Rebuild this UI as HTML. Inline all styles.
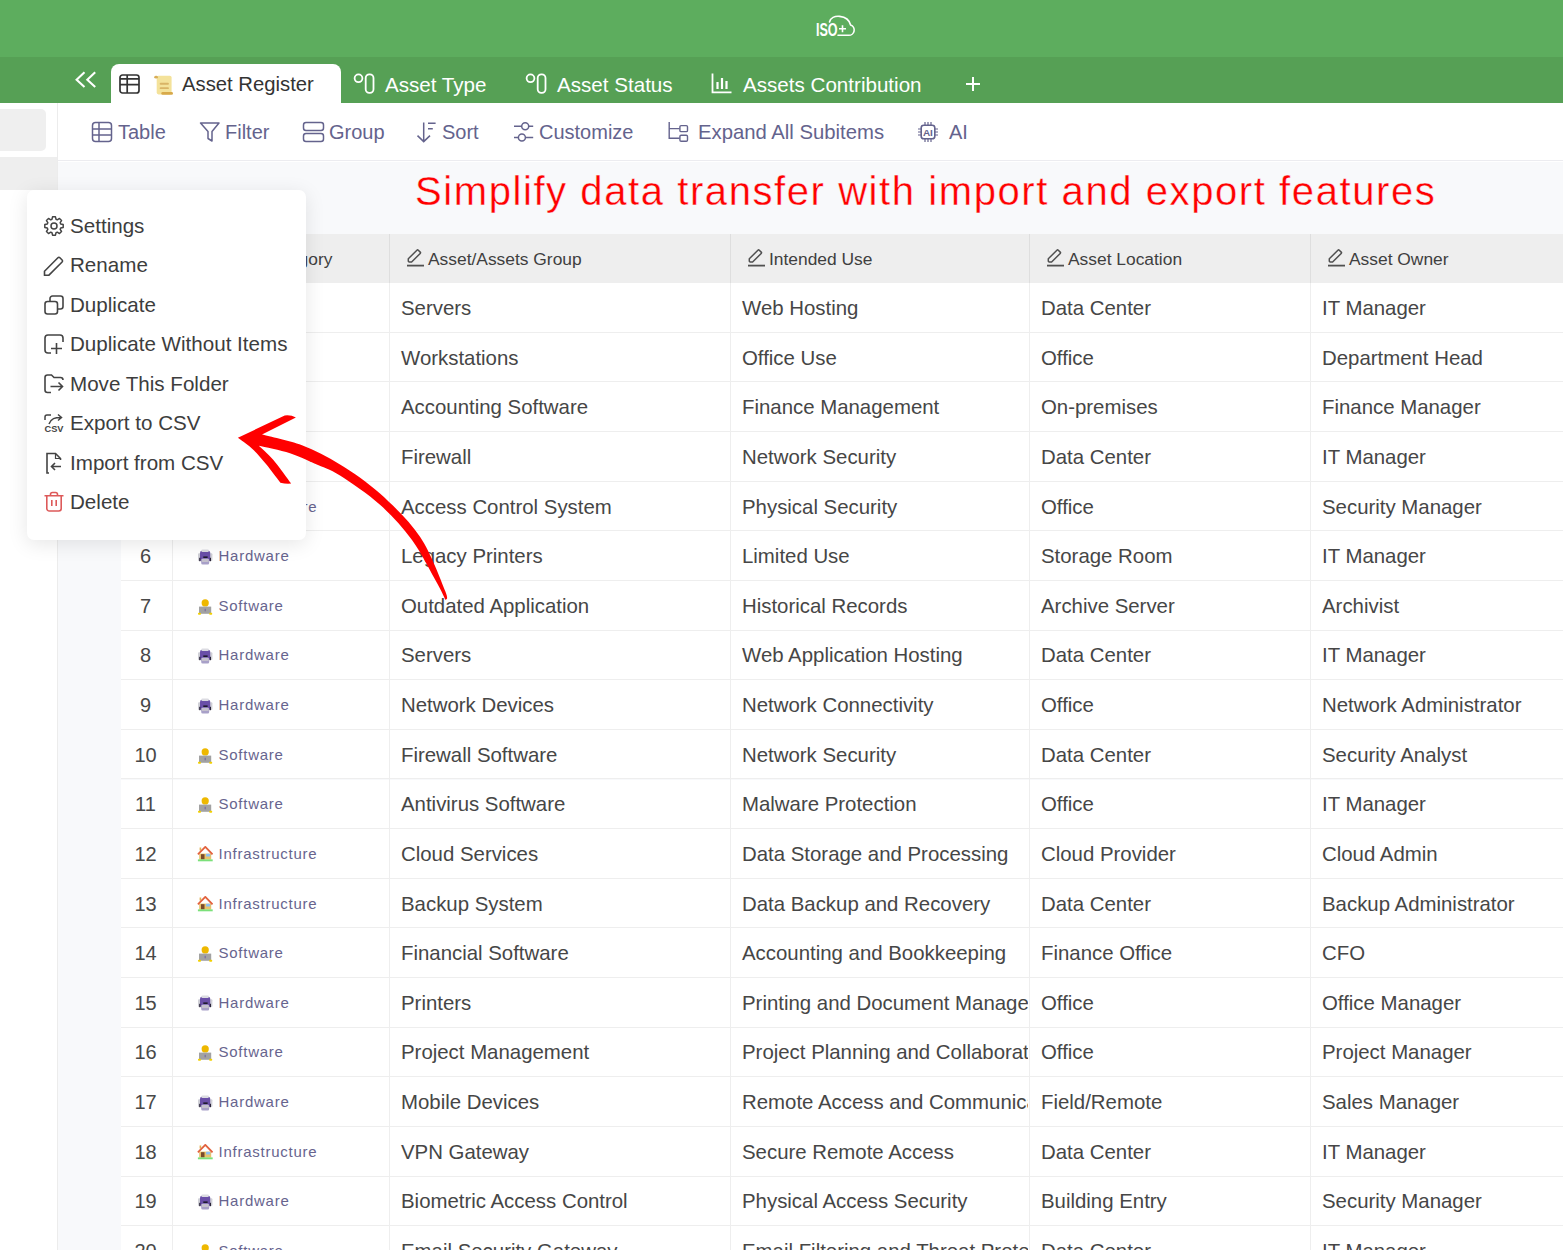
<!DOCTYPE html>
<html><head><meta charset="utf-8">
<style>
*{box-sizing:border-box;margin:0;padding:0}
html,body{width:1563px;height:1250px;overflow:hidden;background:#fff;font-family:"Liberation Sans",sans-serif}
.abs{position:absolute}
#top{position:absolute;left:0;top:0;width:1563px;height:56.5px;background:#5dad5e}
#tabs{position:absolute;left:0;top:56.5px;width:1563px;height:46.5px;background:#56a055}
.tab{position:absolute;top:0;height:47px;color:#fff;font-size:20.6px;line-height:47px;white-space:nowrap}
#atab{position:absolute;left:111px;top:64.3px;width:230px;height:39px;background:#fff;border-radius:8px 8px 0 0}
#toolbar{position:absolute;left:58px;top:103px;width:1505px;height:58px;background:#fff;border-bottom:1px solid #ececf0}
.tb{position:absolute;top:103px;height:58px;line-height:58px;font-size:20px;color:#64638d;white-space:nowrap}
.tb svg{position:absolute;top:19px}
#side{position:absolute;left:0;top:103px;width:58px;height:1147px;background:#fff;border-right:1px solid #ececec}
#sidebox{position:absolute;left:0;top:109px;width:46px;height:42px;background:#efefef;border-radius:0 5px 5px 0}
#sideband{position:absolute;left:0;top:157px;width:57px;height:33px;background:#eeeeee}
#light{position:absolute;left:58px;top:162px;width:1505px;height:1088px;background:#f8f9fb}
#title{position:absolute;left:415px;top:167px;font-size:40px;line-height:48px;color:#ff0000;letter-spacing:1.58px;white-space:nowrap;-webkit-text-stroke:0.35px #f8f9fb}
#tbl{position:absolute;left:0;top:0}
.hdr{position:absolute;background:#eeeeee}
.vline{position:absolute;width:1px;background:#eeeeee}
.htxt{position:absolute;height:50px;line-height:50px;font-size:17.4px;color:#3f3f3f;white-space:nowrap;padding-left:21px}
.htxt svg{top:15px !important}
.row{position:absolute;left:120.5px;width:1443px;background:#fff;border-bottom:1px solid #eeeeee}
.num{position:absolute;top:1px;height:100%;text-align:center;font-size:20px;color:#484848;display:flex;align-items:center;justify-content:center}
.cat{position:absolute;top:0;height:100%;display:flex;align-items:center;font-size:15px;letter-spacing:0.75px;color:#67648e;white-space:nowrap}
.cat svg{margin-right:6px;position:relative;top:0}
.cell{position:absolute;top:1px;height:100%;display:flex;align-items:center;padding-left:12px;font-size:20.4px;color:#464646;white-space:nowrap;overflow:hidden}
#menu{position:absolute;left:27px;top:190px;width:279px;height:350px;background:#fff;border-radius:7px;box-shadow:0 4px 20px rgba(0,0,0,0.10)}
.mi{position:absolute;left:16px;height:30px;line-height:30px;font-size:20.6px;color:#3d3d3d;white-space:nowrap;padding-left:27px}
.mi svg{position:absolute;left:0;top:4px}
</style></head><body>
<div id="top"></div>
<!-- ISO logo -->
<svg class="abs" style="left:812px;top:12px" width="46" height="28" viewBox="0 0 46 28">
  <text x="3.9" y="23.7" font-family="Liberation Sans" font-weight="bold" font-size="18" fill="#fff" textLength="21.7" lengthAdjust="spacingAndGlyphs">ISO</text>
  <path d="M26,23.3 H36.5 A5.3,5.3 0 0 0 38.6,13 C36,2.5 19,1.5 17.5,10" fill="none" stroke="#fff" stroke-width="1.6" stroke-linecap="round"/>
  <path d="M27 16.7 h7 M30.5 13.2 v7" stroke="#fff" stroke-width="1.6"/>
</svg>
<div id="tabs"></div>
<div id="atab"></div>
<!-- collapse chevrons -->
<svg class="abs" style="left:74px;top:70px" width="24" height="20" viewBox="0 0 24 20"><path d="M10.5 2.3 L2.6 9.7 L10.5 17.1 M21.2 2.3 L13.3 9.7 L21.2 17.1" fill="none" stroke="#fff" stroke-width="2.1"/></svg>
<!-- active tab content -->
<svg class="abs" style="left:119px;top:74px" width="21" height="20" viewBox="0 0 21 20"><rect x="1" y="1" width="19" height="18" rx="2.5" fill="none" stroke="#333" stroke-width="1.7"/><path d="M1 4.9 H20 M1 10.6 H20 M8.2 1 V19" stroke="#333" stroke-width="1.7"/></svg>
<svg class="abs" style="left:154px;top:75px" width="20" height="20" viewBox="0 0 20 20"><rect x="2.7" y="0.8" width="14.9" height="18.6" rx="1.8" fill="#f4e29a"/><ellipse cx="2.1" cy="2.2" rx="1.9" ry="1.4" fill="#d8ae58"/><rect x="7.3" y="17" width="11.7" height="2.8" rx="1.4" fill="#d8a94a"/><rect x="5.7" y="7.8" width="9.2" height="1.9" rx="0.9" fill="#d9b466"/><rect x="5.7" y="12.2" width="9.2" height="1.9" rx="0.9" fill="#d9b466"/></svg>
<div class="tab" style="left:182px;top:61px;color:#333;height:47px;font-size:20.3px">Asset Register</div>
<!-- other tabs -->
<svg class="abs" style="left:352px;top:72px" width="25" height="23" viewBox="0 0 25 23"><circle cx="6.5" cy="6.3" r="3.9" fill="none" stroke="#fff" stroke-width="1.8"/><rect x="13.7" y="2.4" width="7.8" height="18.4" rx="3.6" fill="none" stroke="#fff" stroke-width="1.8"/></svg>
<div class="tab" style="left:385px;top:61px">Asset Type</div>
<svg class="abs" style="left:524px;top:72px" width="25" height="23" viewBox="0 0 25 23"><circle cx="6.5" cy="6.3" r="3.9" fill="none" stroke="#fff" stroke-width="1.8"/><rect x="13.7" y="2.4" width="7.8" height="18.4" rx="3.6" fill="none" stroke="#fff" stroke-width="1.8"/></svg>
<div class="tab" style="left:557px;top:61px">Asset Status</div>
<svg class="abs" style="left:710px;top:72px" width="24" height="23" viewBox="0 0 24 23"><path d="M2.5 1.5 V20.3 H21.5" fill="none" stroke="#fff" stroke-width="1.8"/><path d="M7.5 10 V17 M12 6 V17 M16.5 9 V17" stroke="#fff" stroke-width="2.2"/></svg>
<div class="tab" style="left:743px;top:61px">Assets Contribution</div>
<svg class="abs" style="left:965px;top:76px" width="16" height="16" viewBox="0 0 16 16"><path d="M8 1 V15 M1 8 H15" stroke="#fff" stroke-width="2"/></svg>

<div id="side"></div>
<div id="sidebox"></div>
<div id="sideband"></div>
<div id="toolbar"></div>
<!-- toolbar items -->
<svg class="abs" style="left:91px;top:121px" width="22" height="22" viewBox="0 0 22 22"><rect x="1.5" y="1.5" width="19" height="19" rx="3" fill="none" stroke="#64638d" stroke-width="1.5"/><path d="M1.5 8 H20.5 M1.5 14 H20.5 M8 1.5 V20.5" stroke="#64638d" stroke-width="1.5"/></svg>
<div class="tb" style="left:118px">Table</div>
<svg class="abs" style="left:199px;top:121px" width="22" height="22" viewBox="0 0 22 22"><path d="M1.5 2 H20 L13 10.5 V20 L9 17.5 V10.5z" fill="none" stroke="#64638d" stroke-width="1.5" stroke-linejoin="round"/></svg>
<div class="tb" style="left:225px">Filter</div>
<svg class="abs" style="left:302px;top:121px" width="23" height="22" viewBox="0 0 23 22"><rect x="1.5" y="1.5" width="20" height="8" rx="2.5" fill="none" stroke="#64638d" stroke-width="1.5"/><rect x="1.5" y="12.5" width="20" height="8" rx="2.5" fill="none" stroke="#64638d" stroke-width="1.5"/></svg>
<div class="tb" style="left:329px">Group</div>
<svg class="abs" style="left:416px;top:121px" width="22" height="22" viewBox="0 0 22 22"><path d="M7.7 1.5 V20.3 M1.5 14.6 L7.7 20.6 L14 14.6 M12 2.3 H19.6 M12 7.7 H16.8" fill="none" stroke="#64638d" stroke-width="1.5"/></svg>
<div class="tb" style="left:442px">Sort</div>
<svg class="abs" style="left:513px;top:121px" width="22" height="22" viewBox="0 0 22 22"><path d="M1 5.2 H8.6 M15.8 5.2 H20.2 M1 16.5 H5.3 M12.5 16.5 H20.2" stroke="#64638d" stroke-width="1.5"/><circle cx="12.2" cy="5.2" r="3.5" fill="none" stroke="#64638d" stroke-width="1.5"/><circle cx="8.9" cy="16.5" r="3.5" fill="none" stroke="#64638d" stroke-width="1.5"/></svg>
<div class="tb" style="left:539px">Customize</div>
<svg class="abs" style="left:667px;top:121px" width="22" height="22" viewBox="0 0 22 22"><path d="M2.2 1 V17.3 H12.6 M2.2 7.6 H12.6" fill="none" stroke="#64638d" stroke-width="1.4"/><rect x="12.9" y="4.6" width="7.6" height="6" rx="1.2" fill="none" stroke="#64638d" stroke-width="1.4"/><rect x="12.9" y="14.3" width="7.6" height="6" rx="1.2" fill="none" stroke="#64638d" stroke-width="1.4"/></svg>
<div class="tb" style="left:698px;font-size:20.3px">Expand All Subitems</div>
<svg class="abs" style="left:917px;top:121px" width="22" height="22" viewBox="0 0 22 22"><rect x="4.2" y="4.2" width="13.6" height="13.6" rx="2.6" fill="none" stroke="#64638d" stroke-width="1.6"/><path d="M8 1 V4 M11 1 V4 M14 1 V4 M8 18 V21 M11 18 V21 M14 18 V21 M1 8 H4 M1 11 H4 M1 14 H4 M18 8 H21 M18 11 H21 M18 14 H21" stroke="#64638d" stroke-width="1.2"/><text x="5.9" y="14.6" font-family="Liberation Sans" font-weight="bold" font-size="9" fill="#64638d" textLength="10" lengthAdjust="spacingAndGlyphs">AI</text></svg>
<div class="tb" style="left:949px">AI</div>

<div id="light"></div>
<div id="title">Simplify data transfer with import and export features</div>

<div id="tbl">
<div class="hdr" style="left:120.5px;top:234px;width:1442.5px;height:49.2px"></div>
<div class="vline" style="left:172.0px;top:234px;height:49.2px;background:#dedede"></div>
<div class="htxt" style="left:192.5px;top:234px"><svg width="18" height="18" viewBox="0 0 18 18" style="position:absolute;left:0;top:0"><path d="M1.3 12.2 V9.8 L9.9 1.2 a1 1 0 0 1 1.4 0 L13.2 3.1 a1 1 0 0 1 0 1.4 L4.6 13 H2.1z" fill="none" stroke="#505050" stroke-width="1.5" stroke-linejoin="round"/><path d="M0 16.6 H17" stroke="#505050" stroke-width="1.8"/></svg><span>Asset Category</span></div>
<div class="vline" style="left:388.5px;top:234px;height:49.2px;background:#dedede"></div>
<div class="htxt" style="left:407px;top:234px"><svg width="18" height="18" viewBox="0 0 18 18" style="position:absolute;left:0;top:0"><path d="M1.3 12.2 V9.8 L9.9 1.2 a1 1 0 0 1 1.4 0 L13.2 3.1 a1 1 0 0 1 0 1.4 L4.6 13 H2.1z" fill="none" stroke="#505050" stroke-width="1.5" stroke-linejoin="round"/><path d="M0 16.6 H17" stroke="#505050" stroke-width="1.8"/></svg><span>Asset/Assets Group</span></div>
<div class="vline" style="left:729.5px;top:234px;height:49.2px;background:#dedede"></div>
<div class="htxt" style="left:748px;top:234px"><svg width="18" height="18" viewBox="0 0 18 18" style="position:absolute;left:0;top:0"><path d="M1.3 12.2 V9.8 L9.9 1.2 a1 1 0 0 1 1.4 0 L13.2 3.1 a1 1 0 0 1 0 1.4 L4.6 13 H2.1z" fill="none" stroke="#505050" stroke-width="1.5" stroke-linejoin="round"/><path d="M0 16.6 H17" stroke="#505050" stroke-width="1.8"/></svg><span>Intended Use</span></div>
<div class="vline" style="left:1028.5px;top:234px;height:49.2px;background:#dedede"></div>
<div class="htxt" style="left:1047px;top:234px"><svg width="18" height="18" viewBox="0 0 18 18" style="position:absolute;left:0;top:0"><path d="M1.3 12.2 V9.8 L9.9 1.2 a1 1 0 0 1 1.4 0 L13.2 3.1 a1 1 0 0 1 0 1.4 L4.6 13 H2.1z" fill="none" stroke="#505050" stroke-width="1.5" stroke-linejoin="round"/><path d="M0 16.6 H17" stroke="#505050" stroke-width="1.8"/></svg><span>Asset Location</span></div>
<div class="vline" style="left:1309.5px;top:234px;height:49.2px;background:#dedede"></div>
<div class="htxt" style="left:1328px;top:234px"><svg width="18" height="18" viewBox="0 0 18 18" style="position:absolute;left:0;top:0"><path d="M1.3 12.2 V9.8 L9.9 1.2 a1 1 0 0 1 1.4 0 L13.2 3.1 a1 1 0 0 1 0 1.4 L4.6 13 H2.1z" fill="none" stroke="#505050" stroke-width="1.5" stroke-linejoin="round"/><path d="M0 16.6 H17" stroke="#505050" stroke-width="1.8"/></svg><span>Asset Owner</span></div>
<div class="row" style="top:283.20px;height:49.63px">
<div class="num" style="left:-1px;width:52.0px">1</div>
<div class="cat" style="left:76.0px"><svg width="16" height="16" viewBox="0 0 16 16" style="top:1px"><rect x="1" y="4.2" width="14.4" height="7.8" rx="1" fill="#cfcfd6"/><rect x="3" y="1.8" width="10.2" height="10.8" rx="2" fill="#6a4fa8"/><rect x="4.4" y="0.4" width="7.4" height="2.6" rx="1" fill="#dcdce2"/><rect x="2.2" y="8.8" width="1.2" height="3.4" fill="#2a2438"/><rect x="12.8" y="8.8" width="1.2" height="3.4" fill="#2a2438"/><rect x="6.3" y="7.4" width="4.3" height="1.6" fill="#1e1a2e"/><rect x="4.2" y="9.6" width="8" height="5.8" rx="1.5" fill="#a8a0c8"/><rect x="4.8" y="10" width="6.8" height="3" fill="#c4c0cc"/></svg><span>Hardware</span></div>
<div class="cell" style="left:268.5px;width:340px">Servers</div>
<div class="cell" style="left:609.5px;width:298px">Web Hosting</div>
<div class="cell" style="left:908.5px;width:280px">Data Center</div>
<div class="cell" style="left:1189.5px;width:252px">IT Manager</div>
</div>
<div class="row" style="top:332.83px;height:49.63px">
<div class="num" style="left:-1px;width:52.0px">2</div>
<div class="cat" style="left:76.0px"><svg width="16" height="16" viewBox="0 0 16 16" style="top:1px"><rect x="1" y="4.2" width="14.4" height="7.8" rx="1" fill="#cfcfd6"/><rect x="3" y="1.8" width="10.2" height="10.8" rx="2" fill="#6a4fa8"/><rect x="4.4" y="0.4" width="7.4" height="2.6" rx="1" fill="#dcdce2"/><rect x="2.2" y="8.8" width="1.2" height="3.4" fill="#2a2438"/><rect x="12.8" y="8.8" width="1.2" height="3.4" fill="#2a2438"/><rect x="6.3" y="7.4" width="4.3" height="1.6" fill="#1e1a2e"/><rect x="4.2" y="9.6" width="8" height="5.8" rx="1.5" fill="#a8a0c8"/><rect x="4.8" y="10" width="6.8" height="3" fill="#c4c0cc"/></svg><span>Hardware</span></div>
<div class="cell" style="left:268.5px;width:340px">Workstations</div>
<div class="cell" style="left:609.5px;width:298px">Office Use</div>
<div class="cell" style="left:908.5px;width:280px">Office</div>
<div class="cell" style="left:1189.5px;width:252px">Department Head</div>
</div>
<div class="row" style="top:382.46px;height:49.63px">
<div class="num" style="left:-1px;width:52.0px">3</div>
<div class="cat" style="left:76.0px"><svg width="16" height="16" viewBox="0 0 16 16" style="top:1.5px"><circle cx="8.2" cy="3.9" r="3.6" fill="#eeb800"/><rect x="2" y="7.6" width="12.2" height="7.2" fill="#a2a2a2"/><rect x="1" y="13.8" width="3" height="1.9" rx="0.8" fill="#f2d000"/><rect x="12.2" y="13.8" width="3" height="1.9" rx="0.8" fill="#f2d000"/><rect x="7.6" y="9.8" width="1.2" height="2.5" fill="#7a6aa0"/></svg><span>Software</span></div>
<div class="cell" style="left:268.5px;width:340px">Accounting Software</div>
<div class="cell" style="left:609.5px;width:298px">Finance Management</div>
<div class="cell" style="left:908.5px;width:280px">On-premises</div>
<div class="cell" style="left:1189.5px;width:252px">Finance Manager</div>
</div>
<div class="row" style="top:432.09px;height:49.63px">
<div class="num" style="left:-1px;width:52.0px">4</div>
<div class="cat" style="left:76.0px"><svg width="16" height="16" viewBox="0 0 16 16" style="top:1px"><rect x="2.6" y="1.5" width="1.6" height="3" fill="#e0b050"/><rect x="2.2" y="7.6" width="12" height="6" fill="#e9c36a"/><path d="M0.9 8.4 L8.3 0.9 L15.5 8.4" fill="none" stroke="#e2623e" stroke-width="1.8" stroke-linejoin="round"/><rect x="4" y="8.2" width="3.5" height="5.2" fill="#7a4a2a"/><rect x="9" y="7.8" width="4.2" height="2.8" rx="0.6" fill="#8ec0f0"/><rect x="0.9" y="13.4" width="14.8" height="1.9" fill="#7be07a"/></svg><span>Infrastructure</span></div>
<div class="cell" style="left:268.5px;width:340px">Firewall</div>
<div class="cell" style="left:609.5px;width:298px">Network Security</div>
<div class="cell" style="left:908.5px;width:280px">Data Center</div>
<div class="cell" style="left:1189.5px;width:252px">IT Manager</div>
</div>
<div class="row" style="top:481.72px;height:49.63px">
<div class="num" style="left:-1px;width:52.0px">5</div>
<div class="cat" style="left:76.0px"><svg width="16" height="16" viewBox="0 0 16 16" style="top:1px"><rect x="2.6" y="1.5" width="1.6" height="3" fill="#e0b050"/><rect x="2.2" y="7.6" width="12" height="6" fill="#e9c36a"/><path d="M0.9 8.4 L8.3 0.9 L15.5 8.4" fill="none" stroke="#e2623e" stroke-width="1.8" stroke-linejoin="round"/><rect x="4" y="8.2" width="3.5" height="5.2" fill="#7a4a2a"/><rect x="9" y="7.8" width="4.2" height="2.8" rx="0.6" fill="#8ec0f0"/><rect x="0.9" y="13.4" width="14.8" height="1.9" fill="#7be07a"/></svg><span>Infrastructure</span></div>
<div class="cell" style="left:268.5px;width:340px">Access Control System</div>
<div class="cell" style="left:609.5px;width:298px">Physical Security</div>
<div class="cell" style="left:908.5px;width:280px">Office</div>
<div class="cell" style="left:1189.5px;width:252px">Security Manager</div>
</div>
<div class="row" style="top:531.35px;height:49.63px">
<div class="num" style="left:-1px;width:52.0px">6</div>
<div class="cat" style="left:76.0px"><svg width="16" height="16" viewBox="0 0 16 16" style="top:1px"><rect x="1" y="4.2" width="14.4" height="7.8" rx="1" fill="#cfcfd6"/><rect x="3" y="1.8" width="10.2" height="10.8" rx="2" fill="#6a4fa8"/><rect x="4.4" y="0.4" width="7.4" height="2.6" rx="1" fill="#dcdce2"/><rect x="2.2" y="8.8" width="1.2" height="3.4" fill="#2a2438"/><rect x="12.8" y="8.8" width="1.2" height="3.4" fill="#2a2438"/><rect x="6.3" y="7.4" width="4.3" height="1.6" fill="#1e1a2e"/><rect x="4.2" y="9.6" width="8" height="5.8" rx="1.5" fill="#a8a0c8"/><rect x="4.8" y="10" width="6.8" height="3" fill="#c4c0cc"/></svg><span>Hardware</span></div>
<div class="cell" style="left:268.5px;width:340px">Legacy Printers</div>
<div class="cell" style="left:609.5px;width:298px">Limited Use</div>
<div class="cell" style="left:908.5px;width:280px">Storage Room</div>
<div class="cell" style="left:1189.5px;width:252px">IT Manager</div>
</div>
<div class="row" style="top:580.98px;height:49.63px">
<div class="num" style="left:-1px;width:52.0px">7</div>
<div class="cat" style="left:76.0px"><svg width="16" height="16" viewBox="0 0 16 16" style="top:1.5px"><circle cx="8.2" cy="3.9" r="3.6" fill="#eeb800"/><rect x="2" y="7.6" width="12.2" height="7.2" fill="#a2a2a2"/><rect x="1" y="13.8" width="3" height="1.9" rx="0.8" fill="#f2d000"/><rect x="12.2" y="13.8" width="3" height="1.9" rx="0.8" fill="#f2d000"/><rect x="7.6" y="9.8" width="1.2" height="2.5" fill="#7a6aa0"/></svg><span>Software</span></div>
<div class="cell" style="left:268.5px;width:340px">Outdated Application</div>
<div class="cell" style="left:609.5px;width:298px">Historical Records</div>
<div class="cell" style="left:908.5px;width:280px">Archive Server</div>
<div class="cell" style="left:1189.5px;width:252px">Archivist</div>
</div>
<div class="row" style="top:630.61px;height:49.63px">
<div class="num" style="left:-1px;width:52.0px">8</div>
<div class="cat" style="left:76.0px"><svg width="16" height="16" viewBox="0 0 16 16" style="top:1px"><rect x="1" y="4.2" width="14.4" height="7.8" rx="1" fill="#cfcfd6"/><rect x="3" y="1.8" width="10.2" height="10.8" rx="2" fill="#6a4fa8"/><rect x="4.4" y="0.4" width="7.4" height="2.6" rx="1" fill="#dcdce2"/><rect x="2.2" y="8.8" width="1.2" height="3.4" fill="#2a2438"/><rect x="12.8" y="8.8" width="1.2" height="3.4" fill="#2a2438"/><rect x="6.3" y="7.4" width="4.3" height="1.6" fill="#1e1a2e"/><rect x="4.2" y="9.6" width="8" height="5.8" rx="1.5" fill="#a8a0c8"/><rect x="4.8" y="10" width="6.8" height="3" fill="#c4c0cc"/></svg><span>Hardware</span></div>
<div class="cell" style="left:268.5px;width:340px">Servers</div>
<div class="cell" style="left:609.5px;width:298px">Web Application Hosting</div>
<div class="cell" style="left:908.5px;width:280px">Data Center</div>
<div class="cell" style="left:1189.5px;width:252px">IT Manager</div>
</div>
<div class="row" style="top:680.24px;height:49.63px">
<div class="num" style="left:-1px;width:52.0px">9</div>
<div class="cat" style="left:76.0px"><svg width="16" height="16" viewBox="0 0 16 16" style="top:1px"><rect x="1" y="4.2" width="14.4" height="7.8" rx="1" fill="#cfcfd6"/><rect x="3" y="1.8" width="10.2" height="10.8" rx="2" fill="#6a4fa8"/><rect x="4.4" y="0.4" width="7.4" height="2.6" rx="1" fill="#dcdce2"/><rect x="2.2" y="8.8" width="1.2" height="3.4" fill="#2a2438"/><rect x="12.8" y="8.8" width="1.2" height="3.4" fill="#2a2438"/><rect x="6.3" y="7.4" width="4.3" height="1.6" fill="#1e1a2e"/><rect x="4.2" y="9.6" width="8" height="5.8" rx="1.5" fill="#a8a0c8"/><rect x="4.8" y="10" width="6.8" height="3" fill="#c4c0cc"/></svg><span>Hardware</span></div>
<div class="cell" style="left:268.5px;width:340px">Network Devices</div>
<div class="cell" style="left:609.5px;width:298px">Network Connectivity</div>
<div class="cell" style="left:908.5px;width:280px">Office</div>
<div class="cell" style="left:1189.5px;width:252px">Network Administrator</div>
</div>
<div class="row" style="top:729.87px;height:49.63px">
<div class="num" style="left:-1px;width:52.0px">10</div>
<div class="cat" style="left:76.0px"><svg width="16" height="16" viewBox="0 0 16 16" style="top:1.5px"><circle cx="8.2" cy="3.9" r="3.6" fill="#eeb800"/><rect x="2" y="7.6" width="12.2" height="7.2" fill="#a2a2a2"/><rect x="1" y="13.8" width="3" height="1.9" rx="0.8" fill="#f2d000"/><rect x="12.2" y="13.8" width="3" height="1.9" rx="0.8" fill="#f2d000"/><rect x="7.6" y="9.8" width="1.2" height="2.5" fill="#7a6aa0"/></svg><span>Software</span></div>
<div class="cell" style="left:268.5px;width:340px">Firewall Software</div>
<div class="cell" style="left:609.5px;width:298px">Network Security</div>
<div class="cell" style="left:908.5px;width:280px">Data Center</div>
<div class="cell" style="left:1189.5px;width:252px">Security Analyst</div>
</div>
<div class="row" style="top:779.50px;height:49.63px">
<div class="num" style="left:-1px;width:52.0px">11</div>
<div class="cat" style="left:76.0px"><svg width="16" height="16" viewBox="0 0 16 16" style="top:1.5px"><circle cx="8.2" cy="3.9" r="3.6" fill="#eeb800"/><rect x="2" y="7.6" width="12.2" height="7.2" fill="#a2a2a2"/><rect x="1" y="13.8" width="3" height="1.9" rx="0.8" fill="#f2d000"/><rect x="12.2" y="13.8" width="3" height="1.9" rx="0.8" fill="#f2d000"/><rect x="7.6" y="9.8" width="1.2" height="2.5" fill="#7a6aa0"/></svg><span>Software</span></div>
<div class="cell" style="left:268.5px;width:340px">Antivirus Software</div>
<div class="cell" style="left:609.5px;width:298px">Malware Protection</div>
<div class="cell" style="left:908.5px;width:280px">Office</div>
<div class="cell" style="left:1189.5px;width:252px">IT Manager</div>
</div>
<div class="row" style="top:829.13px;height:49.63px">
<div class="num" style="left:-1px;width:52.0px">12</div>
<div class="cat" style="left:76.0px"><svg width="16" height="16" viewBox="0 0 16 16" style="top:1px"><rect x="2.6" y="1.5" width="1.6" height="3" fill="#e0b050"/><rect x="2.2" y="7.6" width="12" height="6" fill="#e9c36a"/><path d="M0.9 8.4 L8.3 0.9 L15.5 8.4" fill="none" stroke="#e2623e" stroke-width="1.8" stroke-linejoin="round"/><rect x="4" y="8.2" width="3.5" height="5.2" fill="#7a4a2a"/><rect x="9" y="7.8" width="4.2" height="2.8" rx="0.6" fill="#8ec0f0"/><rect x="0.9" y="13.4" width="14.8" height="1.9" fill="#7be07a"/></svg><span>Infrastructure</span></div>
<div class="cell" style="left:268.5px;width:340px">Cloud Services</div>
<div class="cell" style="left:609.5px;width:298px">Data Storage and Processing</div>
<div class="cell" style="left:908.5px;width:280px">Cloud Provider</div>
<div class="cell" style="left:1189.5px;width:252px">Cloud Admin</div>
</div>
<div class="row" style="top:878.76px;height:49.63px">
<div class="num" style="left:-1px;width:52.0px">13</div>
<div class="cat" style="left:76.0px"><svg width="16" height="16" viewBox="0 0 16 16" style="top:1px"><rect x="2.6" y="1.5" width="1.6" height="3" fill="#e0b050"/><rect x="2.2" y="7.6" width="12" height="6" fill="#e9c36a"/><path d="M0.9 8.4 L8.3 0.9 L15.5 8.4" fill="none" stroke="#e2623e" stroke-width="1.8" stroke-linejoin="round"/><rect x="4" y="8.2" width="3.5" height="5.2" fill="#7a4a2a"/><rect x="9" y="7.8" width="4.2" height="2.8" rx="0.6" fill="#8ec0f0"/><rect x="0.9" y="13.4" width="14.8" height="1.9" fill="#7be07a"/></svg><span>Infrastructure</span></div>
<div class="cell" style="left:268.5px;width:340px">Backup System</div>
<div class="cell" style="left:609.5px;width:298px">Data Backup and Recovery</div>
<div class="cell" style="left:908.5px;width:280px">Data Center</div>
<div class="cell" style="left:1189.5px;width:252px">Backup Administrator</div>
</div>
<div class="row" style="top:928.39px;height:49.63px">
<div class="num" style="left:-1px;width:52.0px">14</div>
<div class="cat" style="left:76.0px"><svg width="16" height="16" viewBox="0 0 16 16" style="top:1.5px"><circle cx="8.2" cy="3.9" r="3.6" fill="#eeb800"/><rect x="2" y="7.6" width="12.2" height="7.2" fill="#a2a2a2"/><rect x="1" y="13.8" width="3" height="1.9" rx="0.8" fill="#f2d000"/><rect x="12.2" y="13.8" width="3" height="1.9" rx="0.8" fill="#f2d000"/><rect x="7.6" y="9.8" width="1.2" height="2.5" fill="#7a6aa0"/></svg><span>Software</span></div>
<div class="cell" style="left:268.5px;width:340px">Financial Software</div>
<div class="cell" style="left:609.5px;width:298px">Accounting and Bookkeeping</div>
<div class="cell" style="left:908.5px;width:280px">Finance Office</div>
<div class="cell" style="left:1189.5px;width:252px">CFO</div>
</div>
<div class="row" style="top:978.02px;height:49.63px">
<div class="num" style="left:-1px;width:52.0px">15</div>
<div class="cat" style="left:76.0px"><svg width="16" height="16" viewBox="0 0 16 16" style="top:1px"><rect x="1" y="4.2" width="14.4" height="7.8" rx="1" fill="#cfcfd6"/><rect x="3" y="1.8" width="10.2" height="10.8" rx="2" fill="#6a4fa8"/><rect x="4.4" y="0.4" width="7.4" height="2.6" rx="1" fill="#dcdce2"/><rect x="2.2" y="8.8" width="1.2" height="3.4" fill="#2a2438"/><rect x="12.8" y="8.8" width="1.2" height="3.4" fill="#2a2438"/><rect x="6.3" y="7.4" width="4.3" height="1.6" fill="#1e1a2e"/><rect x="4.2" y="9.6" width="8" height="5.8" rx="1.5" fill="#a8a0c8"/><rect x="4.8" y="10" width="6.8" height="3" fill="#c4c0cc"/></svg><span>Hardware</span></div>
<div class="cell" style="left:268.5px;width:340px">Printers</div>
<div class="cell" style="left:609.5px;width:298px">Printing and Document Management</div>
<div class="cell" style="left:908.5px;width:280px">Office</div>
<div class="cell" style="left:1189.5px;width:252px">Office Manager</div>
</div>
<div class="row" style="top:1027.65px;height:49.63px">
<div class="num" style="left:-1px;width:52.0px">16</div>
<div class="cat" style="left:76.0px"><svg width="16" height="16" viewBox="0 0 16 16" style="top:1.5px"><circle cx="8.2" cy="3.9" r="3.6" fill="#eeb800"/><rect x="2" y="7.6" width="12.2" height="7.2" fill="#a2a2a2"/><rect x="1" y="13.8" width="3" height="1.9" rx="0.8" fill="#f2d000"/><rect x="12.2" y="13.8" width="3" height="1.9" rx="0.8" fill="#f2d000"/><rect x="7.6" y="9.8" width="1.2" height="2.5" fill="#7a6aa0"/></svg><span>Software</span></div>
<div class="cell" style="left:268.5px;width:340px">Project Management</div>
<div class="cell" style="left:609.5px;width:298px">Project Planning and Collaboration</div>
<div class="cell" style="left:908.5px;width:280px">Office</div>
<div class="cell" style="left:1189.5px;width:252px">Project Manager</div>
</div>
<div class="row" style="top:1077.28px;height:49.63px">
<div class="num" style="left:-1px;width:52.0px">17</div>
<div class="cat" style="left:76.0px"><svg width="16" height="16" viewBox="0 0 16 16" style="top:1px"><rect x="1" y="4.2" width="14.4" height="7.8" rx="1" fill="#cfcfd6"/><rect x="3" y="1.8" width="10.2" height="10.8" rx="2" fill="#6a4fa8"/><rect x="4.4" y="0.4" width="7.4" height="2.6" rx="1" fill="#dcdce2"/><rect x="2.2" y="8.8" width="1.2" height="3.4" fill="#2a2438"/><rect x="12.8" y="8.8" width="1.2" height="3.4" fill="#2a2438"/><rect x="6.3" y="7.4" width="4.3" height="1.6" fill="#1e1a2e"/><rect x="4.2" y="9.6" width="8" height="5.8" rx="1.5" fill="#a8a0c8"/><rect x="4.8" y="10" width="6.8" height="3" fill="#c4c0cc"/></svg><span>Hardware</span></div>
<div class="cell" style="left:268.5px;width:340px">Mobile Devices</div>
<div class="cell" style="left:609.5px;width:298px">Remote Access and Communication</div>
<div class="cell" style="left:908.5px;width:280px">Field/Remote</div>
<div class="cell" style="left:1189.5px;width:252px">Sales Manager</div>
</div>
<div class="row" style="top:1126.91px;height:49.63px">
<div class="num" style="left:-1px;width:52.0px">18</div>
<div class="cat" style="left:76.0px"><svg width="16" height="16" viewBox="0 0 16 16" style="top:1px"><rect x="2.6" y="1.5" width="1.6" height="3" fill="#e0b050"/><rect x="2.2" y="7.6" width="12" height="6" fill="#e9c36a"/><path d="M0.9 8.4 L8.3 0.9 L15.5 8.4" fill="none" stroke="#e2623e" stroke-width="1.8" stroke-linejoin="round"/><rect x="4" y="8.2" width="3.5" height="5.2" fill="#7a4a2a"/><rect x="9" y="7.8" width="4.2" height="2.8" rx="0.6" fill="#8ec0f0"/><rect x="0.9" y="13.4" width="14.8" height="1.9" fill="#7be07a"/></svg><span>Infrastructure</span></div>
<div class="cell" style="left:268.5px;width:340px">VPN Gateway</div>
<div class="cell" style="left:609.5px;width:298px">Secure Remote Access</div>
<div class="cell" style="left:908.5px;width:280px">Data Center</div>
<div class="cell" style="left:1189.5px;width:252px">IT Manager</div>
</div>
<div class="row" style="top:1176.54px;height:49.63px">
<div class="num" style="left:-1px;width:52.0px">19</div>
<div class="cat" style="left:76.0px"><svg width="16" height="16" viewBox="0 0 16 16" style="top:1px"><rect x="1" y="4.2" width="14.4" height="7.8" rx="1" fill="#cfcfd6"/><rect x="3" y="1.8" width="10.2" height="10.8" rx="2" fill="#6a4fa8"/><rect x="4.4" y="0.4" width="7.4" height="2.6" rx="1" fill="#dcdce2"/><rect x="2.2" y="8.8" width="1.2" height="3.4" fill="#2a2438"/><rect x="12.8" y="8.8" width="1.2" height="3.4" fill="#2a2438"/><rect x="6.3" y="7.4" width="4.3" height="1.6" fill="#1e1a2e"/><rect x="4.2" y="9.6" width="8" height="5.8" rx="1.5" fill="#a8a0c8"/><rect x="4.8" y="10" width="6.8" height="3" fill="#c4c0cc"/></svg><span>Hardware</span></div>
<div class="cell" style="left:268.5px;width:340px">Biometric Access Control</div>
<div class="cell" style="left:609.5px;width:298px">Physical Access Security</div>
<div class="cell" style="left:908.5px;width:280px">Building Entry</div>
<div class="cell" style="left:1189.5px;width:252px">Security Manager</div>
</div>
<div class="row" style="top:1226.17px;height:49.63px">
<div class="num" style="left:-1px;width:52.0px">20</div>
<div class="cat" style="left:76.0px"><svg width="16" height="16" viewBox="0 0 16 16" style="top:1.5px"><circle cx="8.2" cy="3.9" r="3.6" fill="#eeb800"/><rect x="2" y="7.6" width="12.2" height="7.2" fill="#a2a2a2"/><rect x="1" y="13.8" width="3" height="1.9" rx="0.8" fill="#f2d000"/><rect x="12.2" y="13.8" width="3" height="1.9" rx="0.8" fill="#f2d000"/><rect x="7.6" y="9.8" width="1.2" height="2.5" fill="#7a6aa0"/></svg><span>Software</span></div>
<div class="cell" style="left:268.5px;width:340px">Email Security Gateway</div>
<div class="cell" style="left:609.5px;width:298px">Email Filtering and Threat Protection</div>
<div class="cell" style="left:908.5px;width:280px">Data Center</div>
<div class="cell" style="left:1189.5px;width:252px">IT Manager</div>
</div>
<div class="vline" style="left:172.0px;top:283.2px;height:1000px"></div>
<div class="vline" style="left:388.5px;top:283.2px;height:1000px"></div>
<div class="vline" style="left:729.5px;top:283.2px;height:1000px"></div>
<div class="vline" style="left:1028.5px;top:283.2px;height:1000px"></div>
<div class="vline" style="left:1309.5px;top:283.2px;height:1000px"></div>
</div>

<!-- context menu -->
<div id="menu">
<div class="mi" style="top:20.9px"><svg width="22" height="22" viewBox="0 0 22 22"><path d="M17.69,8.95 L20.19,9.55 L20.19,12.45 L17.69,13.05 L17.18,14.29 L18.52,16.47 L16.47,18.52 L14.29,17.18 L13.05,17.69 L12.45,20.19 L9.55,20.19 L8.95,17.69 L7.71,17.18 L5.53,18.52 L3.48,16.47 L4.82,14.29 L4.31,13.05 L1.81,12.45 L1.81,9.55 L4.31,8.95 L4.82,7.71 L3.48,5.53 L5.53,3.48 L7.71,4.82 L8.95,4.31 L9.55,1.81 L12.45,1.81 L13.05,4.31 L14.29,4.82 L16.47,3.48 L18.52,5.53 L17.18,7.71Z" fill="none" stroke="#444" stroke-width="1.5" stroke-linejoin="round"/><circle cx="11" cy="11" r="3" fill="none" stroke="#444" stroke-width="1.5"/></svg>Settings</div>
<div class="mi" style="top:60.4px"><svg width="22" height="22" viewBox="0 0 22 22"><path d="M1.5 17.2 L14.9 3.8 a1.4 1.4 0 0 1 2 0 L19.1 6 a1.4 1.4 0 0 1 0 2 L5.7 21.4 H1.5 Z" fill="none" stroke="#444" stroke-width="1.6" stroke-linejoin="round"/></svg>Rename</div>
<div class="mi" style="top:99.9px"><svg width="22" height="22" viewBox="0 0 22 22"><rect x="2" y="7.5" width="12.5" height="12.5" rx="2.5" fill="none" stroke="#444" stroke-width="1.6"/><path d="M7 7.5 V4.5 a2.5 2.5 0 0 1 2.5 -2.5 H17.5 a2.5 2.5 0 0 1 2.5 2.5 V12.5 a2.5 2.5 0 0 1 -2.5 2.5 H14.5" fill="none" stroke="#444" stroke-width="1.6"/></svg>Duplicate</div>
<div class="mi" style="top:139.4px"><svg width="22" height="22" viewBox="0 0 22 22"><path d="M8 20 H5 a3 3 0 0 1 -3 -3 V5 a3 3 0 0 1 3 -3 H17 a3 3 0 0 1 3 3 V9" fill="none" stroke="#444" stroke-width="1.6"/><path d="M8 15.5 H19 M13.5 10 V21" stroke="#444" stroke-width="1.6"/></svg>Duplicate Without Items</div>
<div class="mi" style="top:178.9px"><svg width="22" height="22" viewBox="0 0 22 22"><path d="M8 19.5 H4.5 a2.5 2.5 0 0 1 -2.5 -2.5 V4.5 a2.5 2.5 0 0 1 2.5 -2.5 H8.5 l2.5 2.5 H17.5 a2.5 2.5 0 0 1 2.5 2.5" fill="none" stroke="#444" stroke-width="1.6"/><path d="M7.5 13.5 H19.5 M15.5 9.5 L19.5 13.5 L15.5 17.5" fill="none" stroke="#444" stroke-width="1.6"/></svg>Move This Folder</div>
<div class="mi" style="top:218.4px"><svg width="22" height="22" viewBox="0 0 22 22"><path d="M8 3 H4 a2 2 0 0 0 -2 2 V8" fill="none" stroke="#444" stroke-width="1.5"/><path d="M6 12 C8 6.5 12 5.5 18 5.5 M15 2.5 L18.5 5.5 L15 8.5" fill="none" stroke="#444" stroke-width="1.5"/><text x="1.5" y="19.8" font-family="Liberation Sans" font-size="8.5" font-weight="bold" fill="#444" textLength="19" lengthAdjust="spacingAndGlyphs">CSV</text></svg>Export to CSV</div>
<div class="mi" style="top:257.9px"><svg width="22" height="22" viewBox="0 0 22 22"><path d="M6 21 H4 V1.5 H12.5 L17.5 6.5 V8" fill="none" stroke="#444" stroke-width="1.6"/><path d="M12.5 1.5 V6.5 H17.5" fill="none" stroke="#444" stroke-width="1.2"/><path d="M18 14.5 H8.5 M12 11 L8.5 14.5 L12 18" fill="none" stroke="#444" stroke-width="1.6"/></svg>Import from CSV</div>
<div class="mi" style="top:297.4px"><svg width="22" height="22" viewBox="0 0 22 22"><path d="M1.5 4.8 H20.5 M7.5 4.5 V3.5 a2 2 0 0 1 2 -2 H12.5 a2 2 0 0 1 2 2 V4.5" fill="none" stroke="#dd5a5a" stroke-width="1.6"/><path d="M3.8 5 V17.5 a2.5 2.5 0 0 0 2.5 2.5 H15.7 a2.5 2.5 0 0 0 2.5 -2.5 V5" fill="none" stroke="#dd5a5a" stroke-width="1.6"/><path d="M8.8 9 V15 M13.2 9 V15" stroke="#dd5a5a" stroke-width="1.6"/></svg>Delete</div>
</div>

<!-- arrow -->
<svg class="abs" style="left:0;top:0" width="1563" height="1250" viewBox="0 0 1563 1250">
  <path d="M237.9,437.8 L284.7,415.4 Q291,414.6 295.9,417.6 L262,434.5 C268.7,436.3 289.0,440.3 302.0,445.3 C315.0,450.3 327.0,456.3 340.0,464.4 C353.0,472.4 366.7,481.5 380.0,493.6 C393.3,505.7 409.1,520.6 420.0,536.8 C430.9,553.0 440.9,580.5 445.2,591.0 C449.4,601.5 445.4,598.5 445.5,600.0 C444.1,597.2 442.6,593.0 437.0,583.0 C431.4,573.0 421.5,553.0 412.0,540.0 C402.5,527.0 392.0,515.5 380.0,504.8 C368.0,494.1 350.8,482.4 340.0,475.6 C329.2,468.8 323.3,467.5 315.0,463.8 C306.7,460.1 299.4,456.2 290.0,453.2 C280.6,450.2 264.0,446.9 258.8,445.7 C261.2,448.0 267.8,453.4 273.2,459.7 C278.6,466.0 288.2,479.5 291.2,483.5 Q286,484 280.4,482.8 C278.0,479.7 270.8,469.8 266.0,464.0 C261.2,458.2 256.3,452.6 251.6,448.2 C246.9,443.8 240.2,439.5 237.9,437.8Z" fill="#ff0000"/>
</svg>
</body></html>
